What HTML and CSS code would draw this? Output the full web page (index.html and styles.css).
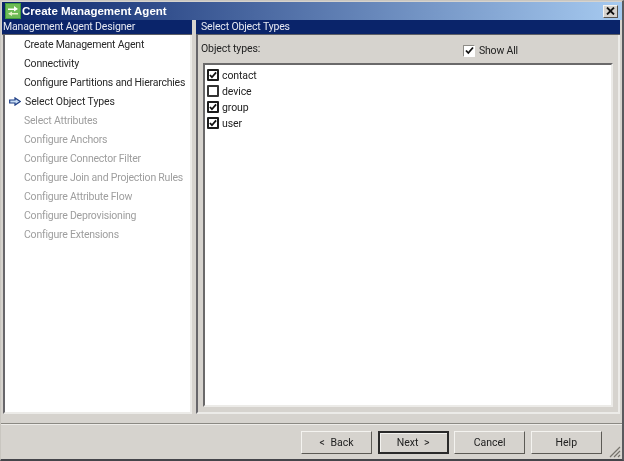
FILE: index.html
```html
<!DOCTYPE html>
<html lang="en">
<head>
<meta charset="utf-8">
<title>Create Management Agent</title>
<link rel="stylesheet" href="styles.css">
</head>
<body>
<div class="window">
  <header class="titlebar">
    <svg class="app-icon" width="16" height="16" viewBox="0 0 16 16"><rect width="16" height="16" fill="#3f9a3c"/><rect x="1" y="1" width="14" height="14" fill="#6dbb55"/><path d="M3 5.500h6V3L13 6 9 8.500V7H3z" fill="#fff"/><path d="M13 10H7V8.500L3 10.800 7 13v-1.500h6z" fill="#e6f2c8"/></svg>
    <span class="title-text">Create Management Agent</span>
    <span class="close-btn"><svg width="9" height="8" viewBox="0 0 9 8"><path d="M1 0.500 8 7.500M8 0.500 1 7.500" stroke="#111" stroke-width="1.800"/></svg></span>
  </header>
  <main class="panes">
    <section class="left-pane">
      <h2 class="pane-head left-head">Management Agent Designer</h2>
      <nav class="steps">
        <div class="step">Create Management Agent</div>
        <div class="step">Connectivity</div>
        <div class="step">Configure Partitions and Hierarchies</div>
        <div class="step current"><svg class="arrow" width="12" height="9" viewBox="0 0 12 9"><path d="M0.700 3H6V0.900L11.300 4.500 6 8.100V6H0.700z" fill="#c9def5" stroke="#1f3f86" stroke-width="1.200"/></svg>Select Object Types</div>
        <div class="step off">Select Attributes</div>
        <div class="step off">Configure Anchors</div>
        <div class="step off">Configure Connector Filter</div>
        <div class="step off">Configure Join and Projection Rules</div>
        <div class="step off">Configure Attribute Flow</div>
        <div class="step off">Configure Deprovisioning</div>
        <div class="step off">Configure Extensions</div>
      </nav>
    </section>
    <section class="right-pane">
      <h2 class="pane-head right-head">Select Object Types</h2>
      <div class="right-body">
        <div class="list-top">
          <span class="list-label">Object types:</span>
          <label class="show-all"><span class="box box-light"><svg width="9" height="9" viewBox="0 0 9 9"><path d="M1 4.500 3.300 7 8 1.500" fill="none" stroke="#111" stroke-width="1.800"/></svg></span>Show All</label>
        </div>
        <div class="list">
          <div class="item"><span class="box"><svg width="8" height="8" viewBox="0 0 9 9"><path d="M1 4.500 3.300 7 8 1.500" fill="none" stroke="#111" stroke-width="2"/></svg></span>contact</div>
          <div class="item"><span class="box box-empty"></span>device</div>
          <div class="item"><span class="box"><svg width="8" height="8" viewBox="0 0 9 9"><path d="M1 4.500 3.300 7 8 1.500" fill="none" stroke="#111" stroke-width="2"/></svg></span>group</div>
          <div class="item"><span class="box"><svg width="8" height="8" viewBox="0 0 9 9"><path d="M1 4.500 3.300 7 8 1.500" fill="none" stroke="#111" stroke-width="2"/></svg></span>user</div>
        </div>
      </div>
    </section>
  </main>
  <footer class="footer">
    <button class="btn btn-nav">&lt; Back</button>
    <button class="btn btn-nav default">Next &gt;</button>
    <button class="btn">Cancel</button>
    <button class="btn">Help</button>
    <svg class="grip" width="13" height="13" viewBox="0 0 13 13"><path d="M12 2 2 12M12 6 6 12M12 10 10 12" stroke="#77746d" stroke-width="1.200"/></svg>
  </footer>
</div>
</body>
</html>
```

FILE: styles.css
```css
* { box-sizing: border-box; }
html, body { margin: 0; height: 100%; }
body { width: 624px; height: 461px; overflow: hidden; background: #d6d3ce; font-family: Roboto, "Liberation Sans", Arial, sans-serif; font-size: 10.500px; color: #222; }
.window { width: 624px; height: 461px; display: flex; flex-direction: column; background: #d6d3ce; border-bottom: 2px solid #45454a; border-right: 2px solid #5a5a5e; border-top: 1px solid #c9c6c0; border-left: 1px solid #c9c6c0; filter: blur(0.3px); }
.titlebar { height: 18px; margin: 1px 0 0 1px; flex: none; display: flex; align-items: center; padding: 0 2px 0 3px; background: linear-gradient(90deg, #0a246a 0%, #a6caf0 100%); color: #fff; }
.app-icon { flex: none; margin-right: 1px; }
.title-text { flex: 1; font-family: "Liberation Sans", Arial, sans-serif; font-size: 11.500px; font-weight: 700; }
.close-btn { width: 15px; height: 13px; margin-right: 2px; display: flex; align-items: center; justify-content: center; background: #d6d3ce; border: 1px solid; border-color: #f4f3f0 #55534e #55534e #f4f3f0; }
.panes { flex: 1; display: flex; min-height: 0; padding: 0 0 0 1px; }
.left-pane { width: 190px; flex: none; display: flex; flex-direction: column; }
.right-pane { flex: 1; margin: 0 2px 0 4px; display: flex; flex-direction: column; min-width: 0; }
.pane-head { flex: none; height: 15px; margin: 0; font-size: 10.500px; font-weight: 400; line-height: 14px; letter-spacing: -0.150px; color: #e6e9f2; background: #0a246a; border-bottom: 1px solid #5d5f66; }
.left-head { padding-left: 1px; }
.right-head { padding-left: 5px; }
.steps { flex: 1; background: #fff; margin-left: 1px; border-left: 2px solid #67666a; border-right: 2px solid #ecebe8; border-bottom: 2px solid #ecebe8; }
.step { height: 19px; padding-left: 19px; line-height: 19px; letter-spacing: -0.220px; color: #2a2a2a; white-space: nowrap; position: relative; }
.step.current { padding-left: 20px; letter-spacing: -0.100px; }
.step.off { color: #9e9e9e; }
.arrow { position: absolute; left: 4px; top: 5px; }
.right-body { flex: 1; display: flex; flex-direction: column; min-height: 0; padding: 0 5px 5px 5px; border-left: 2px solid #67666a; border-right: 2px solid #ecebe8; border-bottom: 2px solid #ecebe8; }
.list-top { height: 28px; flex: none; display: flex; align-items: flex-start; }
.list-label { width: 262px; margin: 7px 0 0 -2px; flex: none; letter-spacing: -0.100px; }
.show-all { margin-top: 9px; display: flex; align-items: center; gap: 4px; letter-spacing: -0.200px; }
.list { flex: 1; background: #fff; padding: 2px 0 0 2px; border: 2px solid; border-color: #6a696a #ecebe8 #ecebe8 #6a696a; }
.item { height: 16px; display: flex; align-items: center; gap: 3px; letter-spacing: -0.100px; }
.box { width: 12px; height: 12px; flex: none; display: flex; align-items: center; justify-content: center; background: #fff; border: 2px solid #1c1c1c; border-radius: 1px; }
.box-empty { border-color: #333; }
.box-light { border: 1px solid #8d8b86; border-right-color: #fff; border-bottom-color: #fff; }
.footer { flex: none; height: 36px; margin-top: 9px; padding: 7px 0 0 300px; display: flex; align-items: flex-start; gap: 5.600px; border-top: 1px solid #8b8983; box-shadow: inset 0 1px 0 #eeece9; position: relative; }
.btn { width: 71px; height: 23px; padding: 0; flex: none; background: #d6d3ce; font-family: inherit; font-size: 10.500px; color: #222; border: 1px solid; border-color: #f4f3f0 #5c5a55 #5c5a55 #f4f3f0; }
.btn-nav { word-spacing: 3px; }
.btn.default { border: 2px solid #2a2a2a; box-shadow: inset 1px 1px 0 #f4f3f0; }
.grip { position: absolute; right: 1px; bottom: 1px; }
```
